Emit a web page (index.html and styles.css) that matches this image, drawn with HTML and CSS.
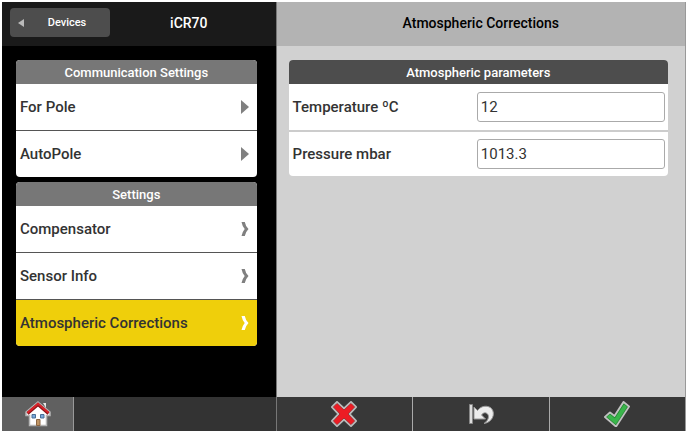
FILE: index.html
```html
<!DOCTYPE html>
<html lang="en">
<head>
    <meta charset="UTF-8">
    <meta name="viewport" content="width=device-width, initial-scale=1.0">
    <title>Atmospheric Corrections</title>
    <link rel="stylesheet" href="styles.css">
</head>
<body>
    <div class="main-container">
        <nav class="sidebar">
            <header class="sidebar-header">
                <button type="button" class="back-button">
                    <svg class="back-arrow" viewBox="0 0 6 8"><path d="M6 0v8L0 4z"/></svg>
                    <span>Devices</span>
                </button>
                <h1>iCR70</h1>
            </header>
            <div class="sidebar-body">
                <section class="card">
                    <h2>Communication Settings</h2>
                    <a href="#" class="row">For Pole
                        <svg class="arrow" viewBox="0 0 9 14"><path d="M1 0l8 7-8 7z"/></svg>
                    </a>
                    <a href="#" class="row">AutoPole
                        <svg class="arrow" viewBox="0 0 9 14"><path d="M1 0l8 7-8 7z"/></svg>
                    </a>
                </section>
                <section class="card">
                    <h2>Settings</h2>
                    <a href="#" class="row">Compensator
                        <svg class="arrow" viewBox="0 0 9 14"><path d="M1.500 0h3.300q0.700 4 3.700 7q-3 3-3.700 7h-3.300q0.700-4 3.200-7q-2.500-3-3.200-7z"/></svg>
                    </a>
                    <a href="#" class="row">Sensor Info
                        <svg class="arrow" viewBox="0 0 9 14"><path d="M1.500 0h3.300q0.700 4 3.700 7q-3 3-3.700 7h-3.300q0.700-4 3.200-7q-2.500-3-3.200-7z"/></svg>
                    </a>
                    <a href="#" class="row active">Atmospheric Corrections
                        <svg class="arrow" viewBox="0 0 9 14"><path d="M1.500 0h3.300q0.700 4 3.700 7q-3 3-3.700 7h-3.300q0.700-4 3.200-7q-2.500-3-3.200-7z"/></svg>
                    </a>
                </section>
            </div>
            <footer class="toolbar">
                <button type="button" class="home-button" aria-label="Home">
                    <svg class="icon" viewBox="0 0 26 26">
                        <path d="M13 1L25 11V14.500H21.500V24.500H4.500V14.500H1V11z" fill="#fff" stroke="#b5b5b5" stroke-width="1.500"/>
                        <path d="M18 2h3v5z" fill="#e8e8e8"/>
                        <path d="M2.500 12.500L13 3.500 23.500 12.500" fill="none" stroke="#8c1418" stroke-width="3"/>
                        <path d="M2.500 11.800L13 2.800 23.500 11.800" fill="none" stroke="#d8232a" stroke-width="2"/>
                        <path d="M7 13.500h3.500v3.500h-3.500zM15.500 13.500h3.500v3.500h-3.500z" fill="#79a9dc" stroke="#4a6f96"/>
                        <path d="M11.500 18.500h3.500v6h-3.500z" fill="#c09565" stroke="#8a6542"/>
                    </svg>
                </button>
            </footer>
        </nav>
        <main class="content">
            <header class="content-header">
                <h1>Atmospheric Corrections</h1>
            </header>
            <div class="content-body">
                <form class="card parameters" id="parameters">
                    <h2>Atmospheric parameters</h2>
                    <div class="row">
                        <label for="temperature">Temperature ºC</label>
                        <input type="text" id="temperature" value="12">
                    </div>
                    <div class="row">
                        <label for="pressure">Pressure mbar</label>
                        <input type="text" id="pressure" value="1013.3">
                    </div>
                </form>
            </div>
            <footer class="toolbar">
                <button type="button" aria-label="Cancel">
                    <svg class="icon" viewBox="0 0 26 26">
                        <path d="M6 1L13 7.500 20 1 25 6 18.500 13 25 20 20 25 13 18.500 6 25 1 20 7.500 13 1 6z" fill="#ed1c24" stroke="#b9b9b9" stroke-width="2" stroke-linejoin="round"/>
                        <path d="M6 2.300L13 9 20 2.300 23.700 6 17 13 23.700 20 20 23.700 13 17 6 23.700 2.300 20 9 13 2.300 6z" fill="none" stroke="#8d171b" stroke-width="0.600"/>
                    </svg>
                </button>
                <button type="button" aria-label="Undo">
                    <svg class="icon" viewBox="0 0 26 26">
                        <path d="M1.500 3.500h3v19h-3z" fill="#ddd" stroke="#888"/>
                        <path d="M6 6L9.500 9.500C13 4.500 20 4 23.500 7.500C28 13 24 21.500 16 22.500C21 19 21.500 14.500 19 12.500C17 11 15 12 13.500 14L17.500 18H6z" fill="#ededed" stroke="#999" stroke-linejoin="round"/>
                    </svg>
                </button>
                <button type="button" aria-label="Accept">
                    <svg class="icon" viewBox="0 0 26 26">
                        <path d="M1 16L6 11.500 10.500 15 19.500 1 25 5.500 12 25.500z" fill="#39b54a" stroke="#c2c2c2" stroke-width="2" stroke-linejoin="round"/>
                        <path d="M2.600 16L6 13 10.800 17 19.900 2.900 23.500 5.800 11.900 23.800z" fill="none" stroke="#1d6b2a" stroke-width="0.600"/>
                    </svg>
                </button>
            </footer>
        </main>
    </div>
</body>
</html>
```
FILE: styles.css
```css
* {
    box-sizing: border-box;
}
body {
    font-family: Roboto, "Liberation Sans", sans-serif;
    margin: 0;
    padding: 2px;
    height: 100vh;
    background-color: #fff;
    color: #333;
}
h1, h2 {
    margin: 0;
    font-weight: 500;
}
h1 {
    font-size: 14px;
    line-height: 20px;
}
h2 {
    padding-top: 1px;
    font-size: 13px;
    line-height: 23px;
    text-align: center;
    color: #fff;
    background-color: #777;
}
.main-container {
    display: grid;
    grid-template-columns: 2fr 3fr;
    height: 100%;
}
.sidebar, .content {
    display: flex;
    flex-direction: column;
}
.sidebar {
    background-color: #000;
}
.content {
    background-color: #d1d1d1;
    border-left: 1px solid #777;
    border-right: 1px solid #999;
}
.sidebar-header {
    display: flex;
    align-items: center;
    height: 44px;
    padding: 0 8px 3px;
    background-color: #1a1a1a;
    color: #fff;
}
.sidebar-header h1 {
    flex: 1;
    text-align: center;
}
.content-header {
    display: flex;
    justify-content: center;
    align-items: center;
    height: 44px;
    padding-bottom: 2px;
    background-color: #b3b3b3;
    color: #000;
}
.back-button {
    display: flex;
    align-items: center;
    width: 100px;
    height: 29px;
    padding: 0 8px;
    border: none;
    border-radius: 4px;
    background-color: #4d4d4d;
    color: #fff;
    font: 500 11px Roboto, "Liberation Sans", sans-serif;
    cursor: pointer;
}
.back-button span {
    flex: 1;
    padding-left: 8px;
    text-align: center;
}
.back-arrow {
    width: 6px;
    height: 8px;
    fill: #bbb;
}
.sidebar-body, .content-body {
    flex: 1;
    padding: 14px 19px 0 14px;
}
.content-body {
    padding: 14px 17px 0 12px;
}
.card {
    margin-bottom: 5px;
    border-radius: 4px;
    background-color: #fff;
    overflow: hidden;
}
.row {
    display: flex;
    justify-content: space-between;
    align-items: center;
    height: 46px;
    padding: 0 8px 0 4px;
    color: #333;
    font-size: 15px;
    font-weight: 500;
    text-decoration: none;
}
.row + .row {
    height: 47px;
    border-top: 1px solid #555;
}
.row.active {
    background-color: #efcf0b;
}
.arrow {
    width: 9px;
    height: 14px;
    fill: #808080;
}
.active .arrow {
    fill: #fff;
}
.parameters h2 {
    background-color: #4d4d4d;
}
.parameters .row {
    padding-right: 3px;
}
.parameters .row + .row {
    height: 46px;
    border-top: 2px solid #ccc;
}
.parameters input {
    width: calc(50% + 2px);
    height: 30px;
    padding: 0 3px;
    border: 1px solid #aaa;
    border-radius: 3px;
    background-color: #fff;
    color: #333;
    font: 15px Roboto, "Liberation Sans", sans-serif;
}
.toolbar {
    display: flex;
    height: 34px;
    background-color: #333;
}
.toolbar button {
    display: flex;
    flex: 1;
    justify-content: center;
    align-items: center;
    padding: 0;
    border: none;
    background-color: #383838;
    cursor: pointer;
}
.toolbar button + button {
    border-left: 1px solid #aaa;
}
.toolbar .home-button {
    flex: 0 0 72px;
    border-right: 1px solid #999;
    background-color: #606060;
}
.icon {
    width: 26px;
    height: 26px;
}
```
